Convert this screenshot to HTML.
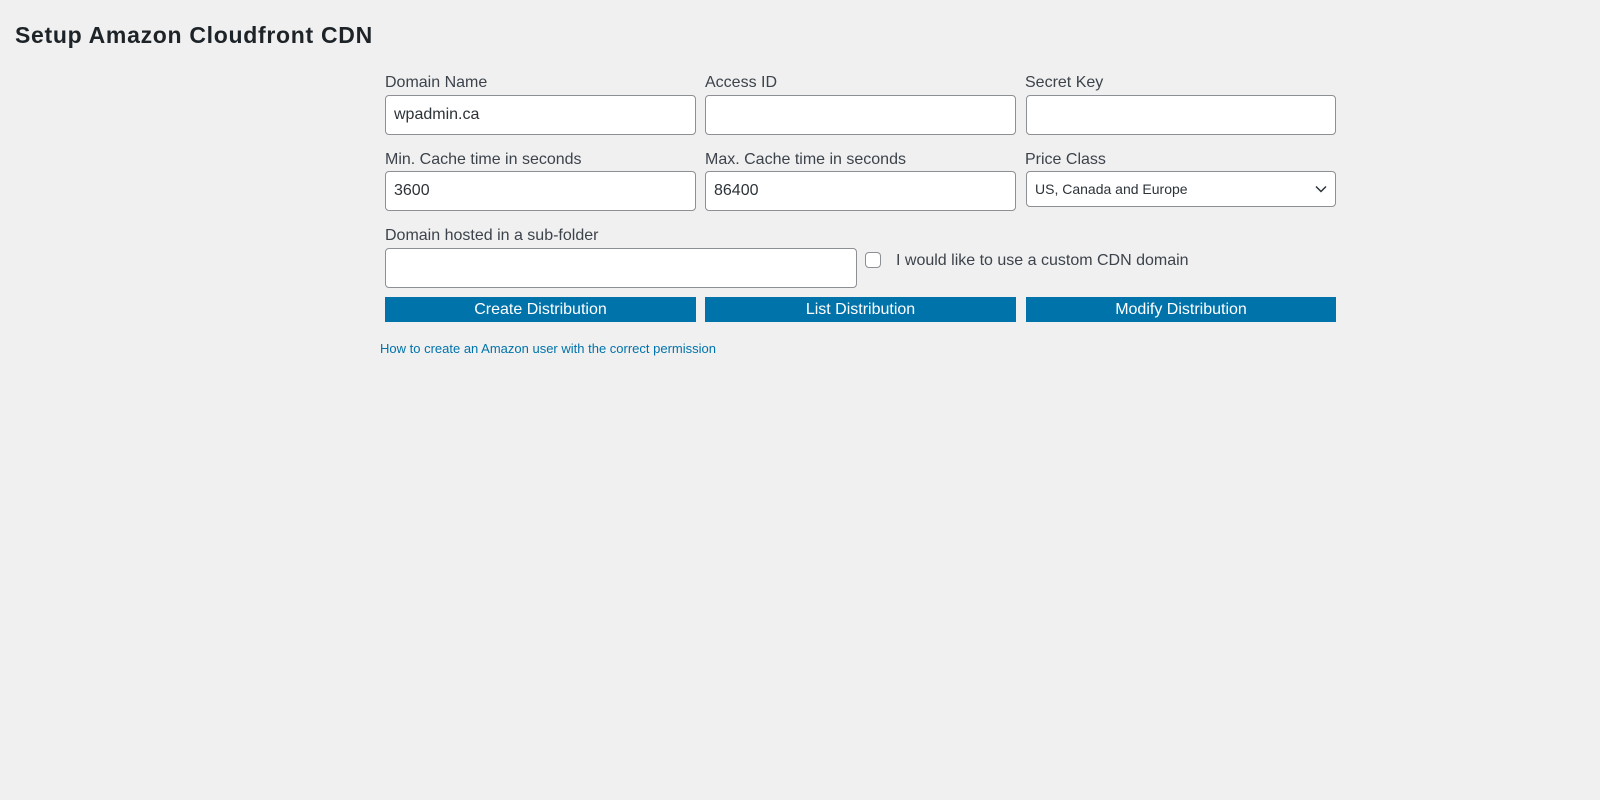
<!DOCTYPE html>
<html><head><style>
body{margin:0;width:1600px;height:800px;background:#f0f0f1;font-family:"Liberation Sans",sans-serif;color:#3c434a;position:relative;overflow:hidden}
.a{position:absolute}
h1{position:absolute;left:15px;top:22px;margin:0;font-size:23px;font-weight:bold;color:#1d2327;letter-spacing:0.7px}
.l{position:absolute;font-size:16px;color:#3c434a;white-space:nowrap}
.i{position:absolute;box-sizing:border-box;background:#fff;border:1px solid #8c8f94;border-radius:4px;font-size:16px;color:#2c3338;padding-left:8px;line-height:38px}
.b{position:absolute;top:297px;height:25px;width:311px;background:#0073aa;color:#fff;font-size:16px;text-align:center;line-height:25px}
</style></head><body>
<h1>Setup Amazon Cloudfront CDN</h1>
<div class="l" style="left:385px;top:74px">Domain Name</div>
<div class="l" style="left:705px;top:74px">Access ID</div>
<div class="l" style="left:1025px;top:74px">Secret Key</div>
<div class="i" style="left:385px;top:95px;width:311px;height:40px">wpadmin.ca</div>
<div class="i" style="left:705px;top:95px;width:311px;height:40px"></div>
<div class="i" style="left:1026px;top:95px;width:310px;height:40px"></div>
<div class="l" style="left:385px;top:151px">Min. Cache time in seconds</div>
<div class="l" style="left:705px;top:151px">Max. Cache time in seconds</div>
<div class="l" style="left:1025px;top:151px">Price Class</div>
<div class="i" style="left:385px;top:171px;width:311px;height:40px">3600</div>
<div class="i" style="left:705px;top:171px;width:311px;height:40px">86400</div>
<div class="i" style="left:1026px;top:171px;width:310px;height:36px;font-size:14px;line-height:34px">US, Canada and Europe
<svg class="a" style="right:8px;top:12px" width="12" height="10" viewBox="0 0 12 10"><path d="M1 2.5L6 7.5L11 2.5" fill="none" stroke="#2c3338" stroke-width="1.5"/></svg></div>
<div class="l" style="left:385px;top:227px">Domain hosted in a sub-folder</div>
<div class="i" style="left:385px;top:248px;width:472px;height:40px"></div>
<div class="a" style="left:865px;top:252px;width:16px;height:16px;box-sizing:border-box;border:1px solid #8c8f94;border-radius:4px;background:#fff"></div>
<div class="l" style="left:896px;top:252px">I would like to use a custom CDN domain</div>
<div class="b" style="left:385px">Create Distribution</div>
<div class="b" style="left:705px">List Distribution</div>
<div class="b" style="left:1026px;width:310px">Modify Distribution</div>
<div class="a" style="left:380px;top:341px;font-size:13px;color:#0073aa">How to create an Amazon user with the correct permission</div>
</body></html>
